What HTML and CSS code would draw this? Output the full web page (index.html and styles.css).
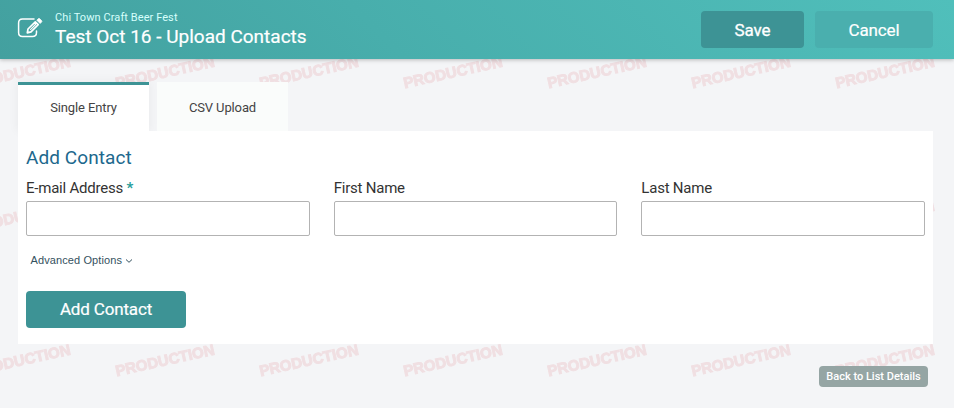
FILE: index.html
```html
<!DOCTYPE html>
<html lang="en">
<head>
<meta charset="utf-8">
<title>Upload Contacts</title>
<link rel="stylesheet" href="styles.css">
</head>
<body>
<svg class="watermark" aria-hidden="true">
  <defs>
    <pattern id="env" x="-32" y="-50" width="144" height="144" patternUnits="userSpaceOnUse">
      <text class="watermark-text" transform="translate(4.7 138.2) rotate(-12.5)" textLength="101" lengthAdjust="spacingAndGlyphs">PRODUCTION</text>
    </pattern>
  </defs>
  <rect width="100%" height="100%" fill="url(#env)"/>
</svg>
<header class="header">
  <svg class="edit-icon" viewBox="0 0 26 22" width="26" height="22">
    <path d="M17 2H5.5Q1.6 2 1.6 6V15.5Q1.6 19.5 5.5 19.5H15.5Q19.5 19.5 19.5 15.5V14" fill="none" stroke="#fff" stroke-width="1.5" stroke-linecap="round"/>
    <path d="M10.3 15.8L11 12L18.3 4.8L21.2 7.7L14 14.9Z" fill="none" stroke="#fff" stroke-width="1.7" stroke-linejoin="round"/>
    <path d="M13.2 12.8L19 7" stroke="#fff" stroke-width="1.1"/>
    <path d="M19.8 3.2L21.3 1.7Q22 1 22.7 1.7L24.6 3.6Q25.3 4.3 24.6 5L23.1 6.5Z" fill="#fff" stroke="#fff" stroke-width=".7"/>
  </svg>
  <div class="heading">
    <div class="event">Chi Town Craft Beer Fest</div>
    <h1 class="title">Test Oct 16 - Upload Contacts</h1>
  </div>
  <div class="actions">
    <button class="btn save">Save</button>
    <button class="btn cancel">Cancel</button>
  </div>
</header>
<main class="page">
  <nav class="tabs">
    <a class="tab active">Single Entry</a>
    <a class="tab">CSV Upload</a>
  </nav>
  <section class="panel">
    <h2 class="panel-title">Add Contact</h2>
    <div class="fields">
      <label class="field"><span>E-mail Address <b class="required">*</b></span><input class="input" type="text"></label>
      <label class="field"><span>First Name</span><input class="input" type="text"></label>
      <label class="field"><span>Last Name</span><input class="input" type="text"></label>
    </div>
    <a class="advanced">Advanced Options
      <svg width="8" height="6" viewBox="0 0 8 6"><path d="M1 1.5L4 4.3L7 1.5" fill="none" stroke="currentColor"/></svg>
    </a>
    <button class="btn add">Add Contact</button>
  </section>
  <div class="footer"><a class="back">Back to List Details</a></div>
</main>
</body>
</html>
```

FILE: styles.css
```css
* { box-sizing: border-box; }
body {
  margin: 0;
  height: 408px;
  overflow: hidden;
  background: #f4f5f7;
  color: #333;
  font-family: Roboto, sans-serif;
}
.watermark {
  position: absolute;
  inset: 0;
  z-index: -1;
  width: 100%;
  height: 100%;
}
.watermark-text {
  font: 700 15px "Liberation Sans", sans-serif;
  fill: #f0dfe2;
  stroke: #f0dfe2;
  stroke-width: 1px;
}
.header {
  display: flex;
  height: 59px;
  padding: 0 21px 0 17px;
  background: linear-gradient(45deg, #43a09f, #48aeac 40%, #50bfbb);
  box-shadow: 0 1px 4px rgba(0, 0, 0, .25);
  color: #fff;
}
.edit-icon { margin-top: 17px; }
.heading { margin: 10px 0 0 12px; }
.event {
  font-size: 11px;
  line-height: 15px;
  letter-spacing: .08px;
  color: #d6fffc;
}
.title {
  margin: 0;
  font-size: 19px;
  font-weight: 400;
  line-height: 23px;
  -webkit-text-stroke: .2px #fff;
}
.actions {
  display: flex;
  gap: 11px;
  margin: 11px 0 0 auto;
}
.btn {
  height: 37px;
  padding: 0;
  border: 0;
  border-radius: 4px;
  background: #3d9395;
  color: #fff;
  font: 400 17px Roboto, sans-serif;
  letter-spacing: -.15px;
  -webkit-text-stroke: .2px #fff;
}
.save { width: 103px; -webkit-text-stroke-width: .3px; }
.cancel { width: 118px; background: #4aafae; }
.page { padding: 23px 21px 0 18px; }
.tabs { display: flex; gap: 8px; }
.tab {
  width: 131px;
  height: 49px;
  border-top: 3px solid #fafcfb;
  background: #fafcfb;
  font-size: 13px;
  line-height: 45px;
  letter-spacing: -.12px;
  text-align: center;
  color: #444;
}
.active {
  border-color: #3d9395;
  background: #fff;
  box-shadow: 0 0 10px rgba(0, 0, 0, .06);
}
.panel {
  position: relative;
  height: 213px;
  padding: 15px 8px 0;
  background: #fff;
}
.panel-title {
  margin: 0 0 9px;
  font-size: 19px;
  font-weight: 400;
  line-height: 23px;
  letter-spacing: .08px;
  color: #20688d;
}
.fields {
  display: grid;
  grid-template-columns: repeat(3, 1fr);
  gap: 24px;
}
.field { font-size: 15px; line-height: 20px; letter-spacing: -.22px; }
.field span { display: block; margin-bottom: 3px; }
.required { font-weight: 700; color: #289e9a; }
.input {
  display: block;
  width: 100%;
  height: 35px;
  border: 1px solid #b3b3b3;
  border-radius: 2px;
  background: #fff;
}
.advanced {
  display: block;
  margin: 17px 0 23px 4.5px;
  font: 11px/15px "Liberation Sans", sans-serif;
  letter-spacing: .1px;
  color: #34515e;
}
.advanced svg { vertical-align: 0; }
.add { display: block; width: 160px; padding-bottom: 1px; }
.footer {
  display: flex;
  justify-content: flex-end;
  padding: 22px 5px 0 0;
}
.back {
  width: 109px;
  height: 21px;
  border-radius: 4px;
  background: #95a5a4;
  color: #fff;
  font-size: 11px;
  font-weight: 500;
  line-height: 21px;
  text-align: center;
}
```
